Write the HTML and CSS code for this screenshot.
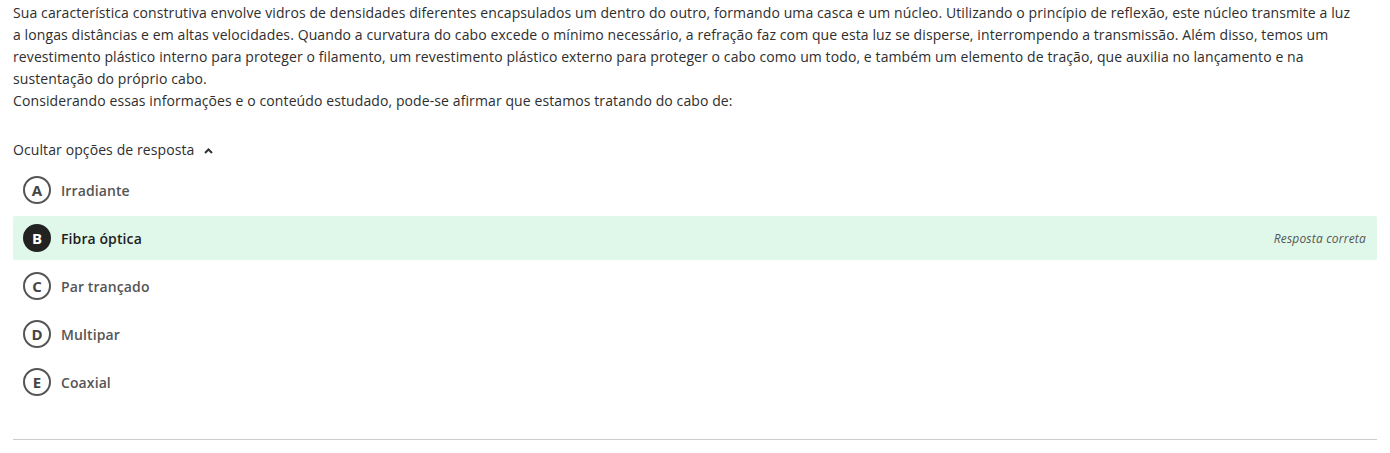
FILE: index.html
```html
<!DOCTYPE html>
<html lang="pt-BR">
<head>
<meta charset="utf-8">
<title>Questão</title>
<link rel="stylesheet" href="styles.css">
</head>
<body>
<div class="question">
  <div class="statement">
    <p>Sua característica construtiva envolve vidros de densidades diferentes encapsulados um dentro do outro, formando uma casca e um núcleo. Utilizando o princípio de reflexão, este núcleo transmite a luz a longas distâncias e em altas velocidades. Quando a curvatura do cabo excede o mínimo necessário, a refração faz com que esta luz se disperse, interrompendo a transmissão. Além disso, temos um revestimento plástico interno para proteger o filamento, um revestimento plástico externo para proteger o cabo como um todo, e também um elemento de tração, que auxilia no lançamento e na sustentação do próprio cabo.</p>
    <p>Considerando essas informações e o conteúdo estudado, pode-se afirmar que estamos tratando do cabo de:</p>
  </div>
  <div class="toggle">Ocultar opções de resposta
    <svg class="chev" width="9" height="6" viewBox="0 0 9 6"><polyline points="1,5 4.5,1.5 8,5" fill="none" stroke="#333" stroke-width="2"/></svg>
  </div>
  <ul class="options">
    <li class="option"><span class="letter">A</span><span class="label">Irradiante</span></li>
    <li class="option correct"><span class="letter">B</span><span class="label">Fibra óptica</span><span class="tag">Resposta correta</span></li>
    <li class="option"><span class="letter">C</span><span class="label">Par trançado</span></li>
    <li class="option"><span class="letter">D</span><span class="label">Multipar</span></li>
    <li class="option"><span class="letter">E</span><span class="label">Coaxial</span></li>
  </ul>
  <hr class="divider">
</div>
</body>
</html>
```

FILE: styles.css
```css
html, body {
  margin: 0;
  padding: 0;
  background: #fff;
}
body {
  font-family: "Open Sans", "Liberation Sans", sans-serif;
  font-size: 14px;
  color: #2e2e2e;
  letter-spacing: 0.1px;
}
.question {
  padding: 2px 13px 0;
}
.statement {
  padding-right: 22px;
}
.statement p {
  margin: 0;
  line-height: 22px;
}
.toggle {
  margin-top: 27px;
  line-height: 22px;
  display: flex;
  align-items: center;
  gap: 10px;
  color: #2e2e2e;
}
.chev {
  margin-top: 1px;
}
.options {
  list-style: none;
  margin: 7px 0 0;
  padding: 0;
  display: flex;
  flex-direction: column;
  gap: 4px;
}
.option {
  height: 44px;
  display: flex;
  align-items: center;
  padding: 0 11px 0 10px;
  border-radius: 2px;
}
.letter {
  width: 24px;
  height: 24px;
  border: 2px solid #555;
  border-radius: 50%;
  display: flex;
  align-items: center;
  justify-content: center;
  font-weight: 700;
  font-size: 15px;
  color: #444;
  flex: none;
  letter-spacing: 0;
}
.label {
  margin-left: 10px;
  font-weight: 600;
  color: #555;
}
.correct {
  background: #e0f8e9;
}
.correct .letter {
  background: #222;
  border-color: #222;
  color: #fff;
}
.correct .label {
  color: #1e1e1e;
}
.tag {
  margin-left: auto;
  font-style: italic;
  font-size: 12px;
  color: #555;
  letter-spacing: 0.2px;
}
.divider {
  margin: 35px 0 0;
  border: 0;
  border-top: 1px solid #ccc;
}
```
